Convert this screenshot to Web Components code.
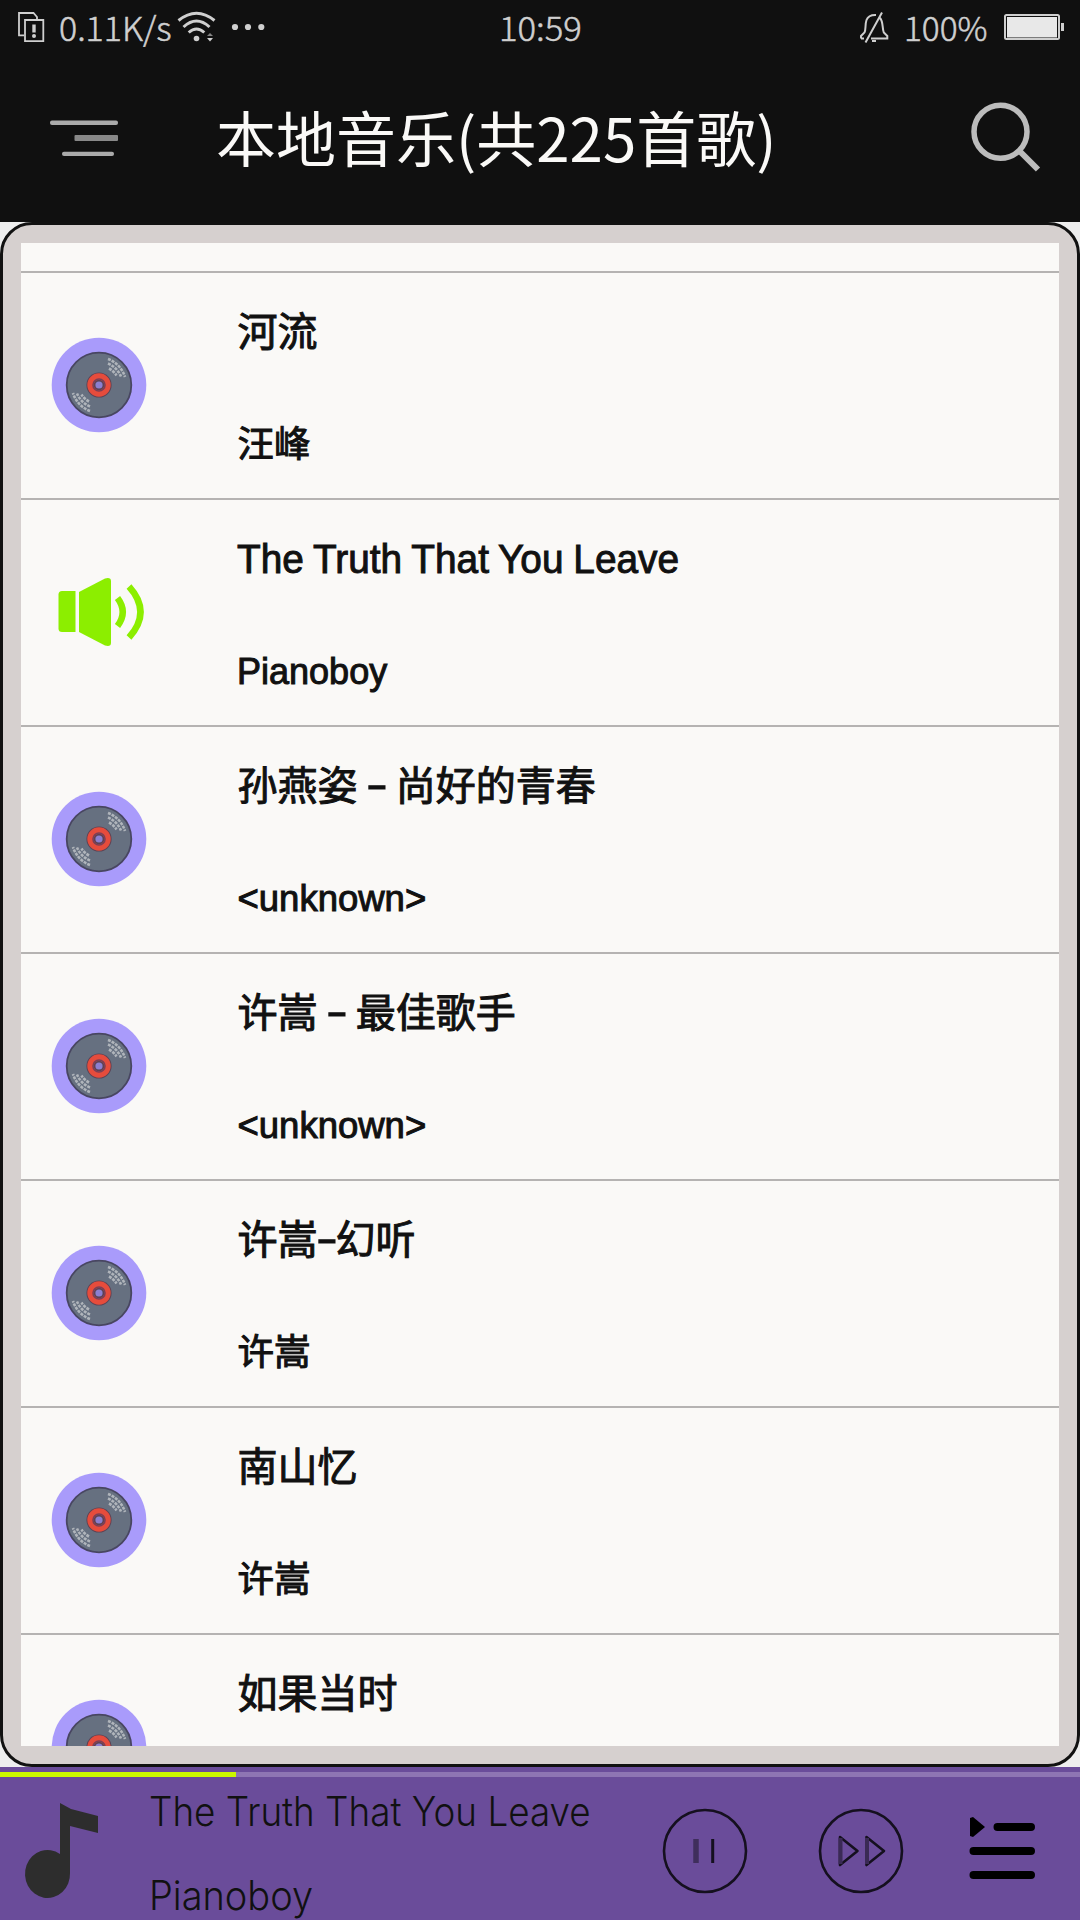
<!DOCTYPE html>
<html lang="zh-CN">
<head>
<meta charset="utf-8">
<title>本地音乐</title>
<style>
html,body{margin:0;padding:0}
body{width:1080px;height:1920px;overflow:hidden;background:#eee;font-family:"Liberation Sans","Noto Sans CJK SC",sans-serif;color:#111}
</style>
</head>
<body>
<music-app></music-app>
<script>
const define=(name,html,setup)=>{
  const t=document.createElement('template');t.innerHTML=html;
  customElements.define(name,class extends HTMLElement{
    connectedCallback(){
      if(this.shadowRoot)return;
      this.attachShadow({mode:'open'}).appendChild(t.content.cloneNode(true));
      if(setup)setup(this,this.shadowRoot);
    }
  });
};

/* One line of text squeezed or stretched to the advance width in its "w" attribute */
define('fit-text',`<style>
:host{display:block;white-space:nowrap;height:var(--lh,50px);line-height:var(--lh,50px)}
span{display:inline-block;transform-origin:0 50%;white-space:pre}
::slotted(i){display:inline-block;font-style:normal;width:18px;text-align:center;transform:translateY(-2px) scale(1.6,1)}
</style><span><slot></slot></span>`,(h,r)=>{
  const w=+h.getAttribute('w'),s=r.querySelector('span');
  if(w){h.style.width=w+'px';s.style.transform='scaleX('+w/s.offsetWidth+')';}
});

define('status-bar',`<style>
:host{display:flex;align-items:center;justify-content:space-between;height:54px;box-sizing:border-box;color:#cfcfcf;font:300 33px "Noto Sans CJK SC",sans-serif;-webkit-text-stroke:.5px #cfcfcf}
div{display:flex;align-items:center;height:54px}
svg{display:block;flex:none}
.l{width:300px;padding-left:16px;box-sizing:border-box}
.c{justify-content:center}
.r{width:300px;justify-content:flex-end}
fit-text{--lh:54px}
</style>
<div class="l">
<svg width="43" height="54" viewBox="16 0 43 54" fill="none" stroke="#cfcfcf" stroke-width="1.800"><path d="M24 35.300H19V13H33.500L37 17V19"/><path d="M25 20H43.300V41.200H25Z"/><path d="M34 24.500V32.500" stroke-width="3.400"/><circle cx="34" cy="36" r="2" fill="#cfcfcf" stroke="none"/></svg>
<fit-text w="113">0.11K/s</fit-text>
<svg width="96" height="54" viewBox="172 0 96 54" fill="none" stroke="#cfcfcf" stroke-width="3"><path d="M178.500 20.500Q196.500 6 214.500 20.500M183.500 27Q196.500 15 209.500 27M188.700 32.500Q196.500 25.500 204.300 32.500"/><g fill="#cfcfcf" stroke="none"><circle cx="196.500" cy="38.500" r="2.800"/><path d="M207 36L210 33L213 36Z" opacity=".6"/><path d="M207 38L210 41.500L213 38Z"/><circle cx="235" cy="27" r="3.100"/><circle cx="248" cy="27" r="3.100"/><circle cx="261.300" cy="27" r="3.100"/></g></svg>
</div>
<div class="c"><fit-text w="83" style="--lh:56px">10:59</fit-text></div>
<div class="r">
<svg width="44" height="54" viewBox="860 0 44 54" fill="none" stroke="#cfcfcf" stroke-width="2"><path d="M861 38.500V36L864.500 32.500C866 30 865 24 866.500 20C868 16 871 14.800 876 15M880 18C883.500 22 882 28 883.800 32.500L887.300 36V38.500H871M861 38.500H864M865.500 42.500L882 12.500M872 41H876"/></svg>
<fit-text w="84" style="--lh:52px">100%</fit-text>
<svg width="92" height="54" viewBox="988 0 92 54"><rect x="1005" y="15" width="54" height="24" rx="1.500" fill="none" stroke="#cfcfcf" stroke-width="2"/><rect x="1007" y="17" width="50" height="20.500" fill="#e8e8e8"/><rect x="1061" y="23" width="3" height="8" fill="#cfcfcf"/></svg>
</div>`);

define('title-bar',`<style>
:host{display:flex;height:168px;align-items:flex-start}
svg{display:block;flex:none}
.t{flex:1;--lh:90px;padding-top:37px;font:400 60px "Noto Sans CJK SC",sans-serif;color:#faf9f7}
</style>
<svg width="216" height="168" viewBox="0 54 216 168"><rect x="50" y="120.500" width="68" height="4.600" rx="2" fill="#aaa"/><rect x="74.500" y="135" width="43.500" height="6" rx="1" fill="#888"/><rect x="62" y="151.800" width="52" height="4.200" rx="2" fill="#aaa"/></svg>
<div class="t"><fit-text><slot></slot></fit-text></div>
<svg width="130" height="168" viewBox="950 54 130 168" fill="none" stroke="#bcbcbc"><circle cx="1000.500" cy="131.700" r="26.500" stroke-width="5.500"/><path d="M1019.500 151L1038 169.500" stroke-width="6"/></svg>`);

define('disc-icon',`<style>:host{display:block}svg{display:block}</style>
<svg width="96" height="96" viewBox="0 0 96 96"><circle cx="48" cy="48" r="47.300" fill="#a99bfb"/><circle cx="48" cy="48" r="32.300" fill="#667080" stroke="#484661" stroke-width="1.800"/>
<g fill="none" stroke="#b0b5bb" stroke-width="2.600" stroke-dasharray="3 1"><path d="M57 22A28 28 0 0 1 74 40M57 26.500A24 24 0 0 1 70 39.500M58 31.500A20 20 0 0 1 65.500 38.500"/><path d="M39 74A28 28 0 0 1 22 56M39 69.500A24 24 0 0 1 26 56.500M38 64.500A20 20 0 0 1 30.500 57.500"/></g>
<circle cx="48" cy="48" r="12.600" fill="#5c4355"/><circle cx="48" cy="48" r="8.500" fill="none" stroke="#e64c3c" stroke-width="6.400"/><circle cx="48" cy="48" r="6" fill="none" stroke="#7b3f55" stroke-width="1.600"/><circle cx="48" cy="48" r="3.600" fill="#8c7fd0"/></svg>`);

define('speaker-icon',`<style>:host{display:block}svg{display:block}</style>
<svg width="96" height="96" viewBox="51 564 96 96"><g fill="#8cee00"><path d="M62 591H75.500V632H62Q58.500 632 58.500 628.500V594.500Q58.500 591 62 591Z"/><path d="M79 592L105 578.500Q111 577 111 581V643Q111 647 105 645.500L79 632Z"/></g><path d="M117.500 598Q128 612 117.500 626M129 586.500Q152 612 129 637.500" fill="none" stroke="#8cee00" stroke-width="6.500"/></svg>`);

define('song-row',`<style>
:host{display:flex;height:225px;flex:none;align-items:center;padding-left:30px;border-bottom:2px solid #b5b3b2}
.i{margin-top:-2px}
.txt{margin-left:90.500px;padding-top:6px;-webkit-text-stroke:1px #111;display:flex;flex-direction:column;gap:63px;color:#111}
.a{font-size:40px;--lh:50px;word-spacing:-1px}
.b{font-size:36.500px;--lh:50px}
:host([playing]) .txt{margin-left:89.500px}
:host([playing]) .a{font-size:41px}
</style><span class="i"></span><div class="txt"><div class="a"><fit-text></fit-text></div><div class="b"><fit-text></fit-text></div></div>`,(h,r)=>{
  r.querySelector('.i').innerHTML=h.hasAttribute('playing')?'<speaker-icon></speaker-icon>':'<disc-icon></disc-icon>';
  [['.a','name','nw'],['.b','artist','aw']].forEach(([c,k,w])=>{
    const f=document.createElement('fit-text');
    (h.getAttribute(k)||'').split(/(-)/).forEach(p=>{
      if(p==='-'){const i=document.createElement('i');i.textContent=p;f.append(i);}
      else f.append(p);
    });
    if(h.hasAttribute(w))f.setAttribute('w',h.getAttribute(w));
    r.querySelector(c).replaceChildren(f);
  });
});

define('song-list',`<style>
:host{display:block;box-sizing:border-box;height:1545px;border:3px solid #111;border-radius:32px;background:#d6d0cf;padding:18px}
.v{height:1503px;overflow:hidden;display:flex;flex-direction:column;background:#faf9f7}
.s{height:28px;flex:none;border-bottom:2px solid #b5b3b2}
</style><div class="v"><div class="s"></div><slot></slot></div>`);

define('player-bar',`<style>
:host{display:block;height:153px;background:#6a4c9a;overflow:hidden}
.p{height:5px;margin-top:5px;background:#8e75b3}
.p i{display:block;width:236px;height:5px;background:#cbf800}
.g{display:flex;height:143px}
svg{display:block;flex:none}
.x{width:511px;color:#111;font:300 40.500px Inter,sans-serif;--lh:48px;display:flex;flex-direction:column;gap:36px;padding-top:11px}
:host:before{content:"";display:table}
</style><div class="p"><i></i></div><div class="g">
<svg width="149" height="143" viewBox="0 1777 149 143" fill="#2d2d2d"><path d="M60 1803L71 1809L98 1816V1833L70 1826V1873A22.500 24 0 1 1 60 1854Z"/></svg>
<div class="x"><fit-text w="442">The Truth That You Leave</fit-text><fit-text w="164">Pianoboy</fit-text></div>
<svg width="420" height="143" viewBox="660 1777 420 143" fill="none" stroke="#15101f" stroke-width="2.600"><circle cx="705" cy="1851" r="41"/><path d="M696 1839V1863" stroke="#3f2e5c" stroke-width="5.500"/><path d="M712.700 1839V1863" stroke-width="3"/><circle cx="861" cy="1851" r="41"/><path d="M840 1837L857.500 1851L840 1865ZM866.500 1837L884 1851L866.500 1865Z" stroke-linejoin="round"/><path d="M840.500 1838V1864M867 1838V1864" stroke="#3a2a55" stroke-width="4"/><g stroke="#000" stroke-width="8" stroke-linecap="round"><path d="M997.500 1827H1031M973.500 1851H1031M973.500 1875H1031"/></g><path d="M970 1818L973 1817L985 1827L973 1837L970 1836Z" fill="#000" stroke="none"/></svg>
</div>`);

define('music-app',`<style>
:host{display:flex;flex-direction:column;height:1920px;width:1080px}
header{background:#101010;height:222px}
</style>
<header><status-bar></status-bar><title-bar>本地音乐(共225首歌)</title-bar></header>
<song-list>
<song-row name="河流" artist="汪峰"></song-row>
<song-row playing name="The Truth That You Leave" nw="442" artist="Pianoboy" aw="150"></song-row>
<song-row name="孙燕姿 - 尚好的青春" artist="&lt;unknown&gt;" aw="189"></song-row>
<song-row name="许嵩 - 最佳歌手" artist="&lt;unknown&gt;" aw="189"></song-row>
<song-row name="许嵩-幻听" artist="许嵩"></song-row>
<song-row name="南山忆" artist="许嵩"></song-row>
<song-row name="如果当时"></song-row>
</song-list>
<player-bar></player-bar>`);
</script>
</body>
</html>
